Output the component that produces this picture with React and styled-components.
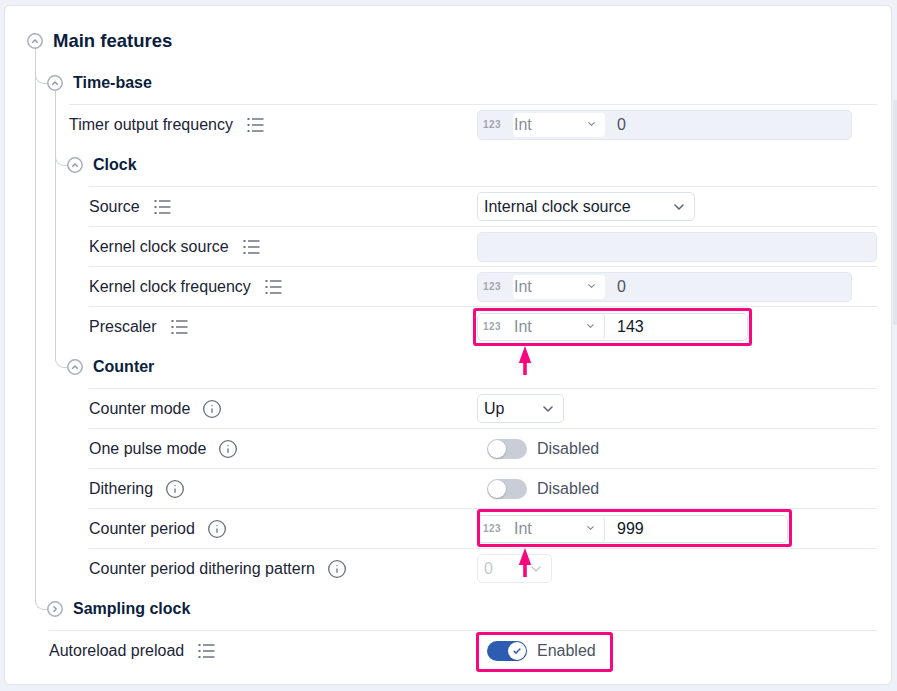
import React from 'react';
import styled, { createGlobalStyle, css } from 'styled-components';
import { Info } from 'lucide-react';

const LINE = '#cbd0d9';
const PINK = '#f7087f';

const GlobalStyle = createGlobalStyle`
  html, body { margin: 0; padding: 0; background: #eef1f7; }
  body { font-family: "Liberation Sans", Arial, sans-serif; }
  * { box-sizing: border-box; }
`;

const Page = styled.div`
  display: flex;
  align-items: flex-start;
  padding: 5px 0 5px 4px;
`;

const Card = styled.section`
  flex: 1;
  background: #fff;
  border: 1px solid #dfe4ee;
  border-radius: 6px;
  padding: 14px 14px 14px 22px;
`;

const ScrollTrack = styled.div`
  width: 4px;
  margin-left: 1px;
  padding-top: 95px;
`;

const ScrollThumb = styled.div`
  height: 225px;
  background: #e1e5ee;
  border-radius: 2px 0 0 2px;
`;

/* ---------- tree ---------- */

const GroupBox = styled.div`
  margin-left: ${(p) => (p.$nested ? '-2px' : '0')};
`;

const Head = styled.div`
  position: relative;
  display: flex;
  align-items: center;
  gap: 10px;
  height: 42px;
  ${(p) =>
    p.$trunk &&
    css`
      &::after {
        content: '';
        position: absolute;
        left: 8px;
        top: 29px;
        bottom: 0;
        border-left: 1px solid ${LINE};
      }
    `}
`;

const Title = styled.span`
  font-weight: 700;
  font-size: ${(p) => (p.$level === 0 ? '18.5px' : '16px')};
  color: #0b1e3d;
`;

const Children = styled.div`
  margin-left: 22px;
`;

const Slot = styled.div`
  position: relative;
  ${(p) =>
    p.$through &&
    css`
      &::before {
        content: '';
        position: absolute;
        left: -14px;
        top: 0;
        bottom: 0;
        border-left: 1px solid ${LINE};
      }
    `}
  ${(p) =>
    p.$elbow &&
    css`
      &::after {
        content: '';
        position: absolute;
        left: -14px;
        top: 0;
        width: 12px;
        height: 21px;
        border-left: 1px solid ${LINE};
        border-bottom: 1px solid ${LINE};
        border-bottom-left-radius: 9px;
      }
    `}
`;

const FoldIcon = ({ open }) => (
  <svg width="16" height="16" viewBox="0 0 16 16" style={{ flex: 'none', position: 'relative', zIndex: 1 }}>
    <circle cx="8" cy="8" r="7.2" fill="#fff" stroke="#a9aeb7" strokeWidth="1.5" />
    {open ? (
      <path d="M5.7 9.2 8 6.9l2.3 2.3" fill="none" stroke="#8f959e" strokeWidth="1.4" strokeLinecap="round" strokeLinejoin="round" />
    ) : (
      <path d="M6.9 5.7 9.2 8l-2.3 2.3" fill="none" stroke="#8f959e" strokeWidth="1.4" strokeLinecap="round" strokeLinejoin="round" />
    )}
  </svg>
);

const Group = ({ title, level = 1, open = true, trunk = false, children }) => (
  <GroupBox $nested={level > 0}>
    <Head $trunk={trunk && open}>
      <FoldIcon open={open} />
      <Title $level={level}>{title}</Title>
    </Head>
    {open && children ? <Children>{children}</Children> : null}
  </GroupBox>
);

/* ---------- rows ---------- */

const Row = styled.div`
  display: grid;
  grid-template-columns: 1fr 400px;
  align-items: center;
  height: 40px;
  border-top: 1px solid #e6e9f0;
`;

const Label = styled.div`
  display: flex;
  align-items: center;
  gap: 12px;
  font-size: 16px;
  color: #1b2436;
  white-space: nowrap;
`;

const Value = styled.div`
  display: flex;
  align-items: center;
  height: 100%;
`;

const ListIcon = () => (
  <svg width="19" height="16" viewBox="0 0 19 16" style={{ flex: 'none' }}>
    <g fill="#6d7480">
      <rect x="2.5" y="1" width="2" height="2" />
      <rect x="2.5" y="7" width="2" height="2" />
      <rect x="2.5" y="13" width="2" height="2" />
    </g>
    <g stroke="#6d7480" strokeWidth="1.5">
      <line x1="7" y1="2" x2="18.5" y2="2" />
      <line x1="7" y1="8" x2="18.5" y2="8" />
      <line x1="7" y1="14" x2="18.5" y2="14" />
    </g>
  </svg>
);

const InfoIcon = () => <Info size={20} strokeWidth={1.6} color="#6b717c" style={{ flex: 'none' }} />;

const Chevron = ({ w = 10, color = '#5b6270' }) => (
  <svg width={w} height={w * 0.6} viewBox="0 0 10 6" style={{ flex: 'none' }}>
    <path d="M1 1l4 4 4-4" fill="none" stroke={color} strokeWidth="1.5" strokeLinecap="round" strokeLinejoin="round" />
  </svg>
);

/* ---------- controls ---------- */

const Select = styled.div`
  display: flex;
  align-items: center;
  justify-content: space-between;
  width: ${(p) => p.$w}px;
  height: 29px;
  padding: 0 10px 0 6px;
  border: 1px solid ${(p) => (p.$disabled ? '#e8ebf0' : '#dde2ea')};
  border-radius: 5px;
  font-size: 16px;
  color: ${(p) => (p.$disabled ? '#c4c8cf' : '#161e2e')};
  background: #fff;
`;

const NumField = styled.div`
  display: flex;
  align-items: center;
  width: ${(p) => p.$w}px;
  height: ${(p) => (p.$disabled ? 30 : 28)}px;
  border: 1px solid ${(p) => (p.$disabled ? '#e3e7ee' : '#dde2ea')};
  border-radius: 5px;
  background: ${(p) => (p.$disabled ? '#eef2f8' : '#fff')};
`;

const TypeTag = styled.span`
  width: 35px;
  padding-left: 5px;
  font-size: 10px;
  font-weight: 700;
  letter-spacing: 0.5px;
  color: #a0a6b0;
`;

const TypeSelect = styled.span`
  display: flex;
  align-items: center;
  justify-content: space-between;
  width: 92px;
  align-self: stretch;
  padding: 0 10px 0 1px;
  font-size: 16px;
  color: #8a8f99;
  background: #fff;
  ${(p) =>
    p.$disabled
      ? css`
          margin: 2px 0;
          border-radius: 4px;
        `
      : css`
          border-right: 1px solid #e3e6ec;
          border-radius: 0 4px 4px 0;
        `}
`;

const NumValue = styled.span`
  padding-left: 12px;
  font-size: 16px;
  color: ${(p) => (p.$disabled ? '#4b5261' : '#111827')};
`;

const EmptyField = styled.div`
  width: 100%;
  height: 30px;
  border: 1px solid #e3e7ee;
  border-radius: 5px;
  background: #eef2f8;
`;

const NumberInput = ({ value, width, disabled }) => (
  <NumField $w={width} $disabled={disabled}>
    <TypeTag>123</TypeTag>
    <TypeSelect $disabled={disabled}>
      Int
      <Chevron w={7} color="#80868f" />
    </TypeSelect>
    <NumValue $disabled={disabled}>{value}</NumValue>
  </NumField>
);

const SwitchField = styled.div`
  display: flex;
  align-items: center;
  gap: 10px;
  height: 34px;
  padding: 0 10px;
  font-size: 16px;
  color: #4b5363;
`;

const Track = styled.span`
  display: flex;
  align-items: center;
  justify-content: ${(p) => (p.$on ? 'flex-end' : 'flex-start')};
  width: 40px;
  height: 20px;
  padding: 0 1px;
  border-radius: 10px;
  background: ${(p) => (p.$on ? '#2c5db3' : '#c9cdd6')};
`;

const Knob = styled.span`
  display: flex;
  align-items: center;
  justify-content: center;
  width: 18px;
  height: 18px;
  border-radius: 50%;
  background: #fff;
  box-shadow: 0 1px 2px rgba(30, 40, 60, 0.3);
`;

const Switch = ({ on }) => (
  <SwitchField>
    <Track $on={on}>
      <Knob>
        {on ? (
          <svg width="10" height="10" viewBox="0 0 10 10">
            <path d="M2.2 5.2l1.9 1.9 3.8-4" fill="none" stroke="#2c5db3" strokeWidth="1.5" strokeLinecap="round" strokeLinejoin="round" />
          </svg>
        ) : null}
      </Knob>
    </Track>
    {on ? 'Enabled' : 'Disabled'}
  </SwitchField>
);

/* ---------- callout marks drawn over the controls ---------- */

const Highlight = styled.div`
  position: relative;
  display: inline-flex;
  align-items: center;
  &::after {
    content: '';
    position: absolute;
    top: ${(p) => p.$t}px;
    right: ${(p) => p.$r}px;
    bottom: ${(p) => p.$b}px;
    left: ${(p) => p.$l}px;
    border: 3px solid ${PINK};
    border-radius: 3px;
    pointer-events: none;
  }
`;

const ArrowMark = styled.svg`
  position: absolute;
  left: ${(p) => p.$left}px;
  top: calc(100% + ${(p) => p.$gap}px);
`;

const UpArrow = ({ left, gap }) => (
  <ArrowMark $left={left} $gap={gap} width="14" height="29" viewBox="0 0 14 29">
    <polygon points="7,0 0.8,17 13.2,17" fill={PINK} />
    <rect x="5.2" y="15" width="3.6" height="14" fill={PINK} />
  </ArrowMark>
);

/* ---------- page ---------- */

const Field = ({ label, icon = 'list', children }) => (
  <Row>
    <Label>
      {label}
      {icon === 'info' ? <InfoIcon /> : <ListIcon />}
    </Label>
    <Value>{children}</Value>
  </Row>
);

export default function App() {
  return (
    <>
      <GlobalStyle />
      <Page>
        <Card>
          <Group title="Main features" level={0} trunk>
            <Slot $through $elbow>
              <Group title="Time-base" trunk>
                <Slot $through>
                  <Field label="Timer output frequency">
                    <NumberInput value="0" width={375} disabled />
                  </Field>
                </Slot>
                <Slot $through $elbow>
                  <Group title="Clock">
                    <Field label="Source">
                      <Select $w={218}>
                        Internal clock source
                        <Chevron />
                      </Select>
                    </Field>
                    <Field label="Kernel clock source">
                      <EmptyField />
                    </Field>
                    <Field label="Kernel clock frequency">
                      <NumberInput value="0" width={375} disabled />
                    </Field>
                    <Field label="Prescaler">
                      <Highlight $t={-5} $r={-4} $b={-5} $l={-4}>
                        <NumberInput value="143" width={271} />
                        <UpArrow left={41} gap={5} />
                      </Highlight>
                    </Field>
                  </Group>
                </Slot>
                <Slot $elbow>
                  <Group title="Counter">
                    <Field label="Counter mode" icon="info">
                      <Select $w={87}>
                        Up
                        <Chevron />
                      </Select>
                    </Field>
                    <Field label="One pulse mode" icon="info">
                      <Switch on={false} />
                    </Field>
                    <Field label="Dithering" icon="info">
                      <Switch on={false} />
                    </Field>
                    <Field label="Counter period" icon="info">
                      <Highlight $t={-6} $r={-4} $b={-4} $l={0}>
                        <NumberInput value="999" width={311} />
                        <UpArrow left={41} gap={5} />
                      </Highlight>
                    </Field>
                    <Field label="Counter period dithering pattern" icon="info">
                      <Select $w={75} $disabled>
                        0
                        <Chevron color="#c4c8cf" />
                      </Select>
                    </Field>
                  </Group>
                </Slot>
              </Group>
            </Slot>
            <Slot $elbow>
              <Group title="Sampling clock" open={false} />
            </Slot>
            <Field label="Autoreload preload">
              <Highlight $t={-2} $r={-7} $b={-4} $l={-1}>
                <Switch on />
              </Highlight>
            </Field>
          </Group>
        </Card>
        <ScrollTrack>
          <ScrollThumb />
        </ScrollTrack>
      </Page>
    </>
  );
}
